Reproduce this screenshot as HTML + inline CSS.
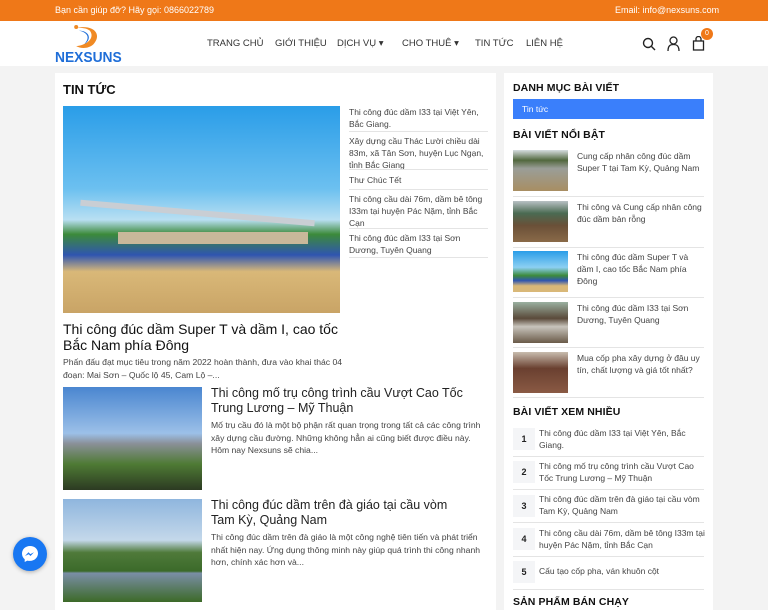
<!DOCTYPE html>
<html><head><meta charset="utf-8"><style>
*{margin:0;padding:0;box-sizing:border-box}
body{width:768px;height:610px;overflow:hidden;background:#f3f3f3;font-family:"Liberation Sans","Noto Sans CJK SC",sans-serif;color:#333;position:relative}
.abs{position:absolute}
.top{left:0;top:0;width:768px;height:21px;background:#ef7818;color:#fff;font-size:9px}
.hdr{left:0;top:21px;width:768px;height:45px;background:#fff}
.nav{top:38px;font-size:9.5px;color:#333;white-space:nowrap}
.card{background:#fff}
.t{font-size:8.5px;line-height:12px;color:#444}
.sep{border-top:1px solid #e4e4e4}
h3{font-size:10.5px;font-weight:bold;color:#111;letter-spacing:.1px}
.num{width:22px;height:22px;background:#f4f5f7;font-size:9px;font-weight:bold;color:#222;text-align:center;line-height:22px}
.ex{font-size:8.6px;line-height:12.5px}
</style></head><body>
<div class="abs top"><span class="abs" style="left:55px;top:5px">Bạn cần giúp đỡ? Hãy gọi: 0866022789</span><span class="abs" style="left:615px;top:5px">Email: info@nexsuns.com</span></div>
<div class="abs hdr"></div>
<svg class="abs" style="left:68px;top:23px" width="40" height="28" viewBox="0 0 44 30"><circle cx="9" cy="4" r="2.2" fill="#f08a24"/><path d="M10 5 C28 1 38 12 28 23 C23 28 14 28 9 25 C21 24 30 16 24 8 C20 5 15 5 10 5Z" fill="#f08a24"/><path d="M12 8 C23 8 27 17 18 23 C25 15 21 10 12 8Z" fill="#1f6ed8"/></svg>
<div class="abs" style="left:55px;top:49px;font-size:15px;font-weight:bold;color:#1f6ed8;transform:scaleX(.92);transform-origin:left">NEXSUNS</div>
<div class="abs nav" style="left:207px">TRANG CHỦ</div>
<div class="abs nav" style="left:275px">GIỚI THIỆU</div>
<div class="abs nav" style="left:337px">DỊCH VỤ ▾</div>
<div class="abs nav" style="left:402px">CHO THUÊ ▾</div>
<div class="abs nav" style="left:475px">TIN TỨC</div>
<div class="abs nav" style="left:526px">LIÊN HỆ</div>
<svg class="abs" style="left:642px;top:37px" width="14" height="14" viewBox="0 0 14 14" fill="none" stroke="#222" stroke-width="1.4"><circle cx="6" cy="6" r="4.5"/><path d="M9.5 9.5L13 13"/></svg>
<svg class="abs" style="left:667px;top:36px" width="13" height="15" viewBox="0 0 13 15" fill="none" stroke="#222" stroke-width="1.3"><circle cx="6.5" cy="4.5" r="3.5"/><path d="M1 15C1 10 3 8.5 6.5 8.5S12 10 12 15"/></svg>
<svg class="abs" style="left:692px;top:36px" width="13" height="15" viewBox="0 0 13 15" fill="none" stroke="#222" stroke-width="1.3"><rect x="1.5" y="5" width="10" height="9"/><path d="M4 5V3a2.5 2.5 0 0 1 5 0v2"/></svg>
<div class="abs" style="left:701px;top:28px;width:12px;height:12px;border-radius:50%;background:#ef7818;color:#fff;font-size:7px;text-align:center;line-height:12px">0</div>

<div class="abs card" style="left:55px;top:73px;width:441px;height:537px"></div>
<div class="abs" style="left:63px;top:82px;font-size:13px;font-weight:bold;color:#111">TIN TỨC</div>
<div class="abs" style="left:63px;top:106px;width:277px;height:207px;background:linear-gradient(180deg,#2a9de8 0%,#6cc0f0 40%,#b9dff2 55%,#3c8a3a 62%,#2f55b0 72%,#d9b878 80%,#c9a466 100%)"></div>
<div class="abs" style="left:80px;top:210px;width:235px;height:6px;background:#c9ced4;transform:rotate(5deg)"></div>
<div class="abs" style="left:118px;top:232px;width:190px;height:12px;background:#c8b89a"></div>
<div class="abs t" style="left:349px;top:106px;width:140px">Thi công đúc dầm I33 tại Việt Yên, Bắc Giang.</div>
<div class="abs sep" style="left:349px;top:131px;width:139px"></div>
<div class="abs t" style="left:349px;top:135px;width:140px">Xây dựng cầu Thác Lười chiều dài 83m, xã Tân Sơn, huyện Lục Ngạn, tỉnh Bắc Giang</div>
<div class="abs sep" style="left:349px;top:169px;width:139px"></div>
<div class="abs t" style="left:349px;top:174px">Thư Chúc Tết</div>
<div class="abs sep" style="left:349px;top:189px;width:139px"></div>
<div class="abs t" style="left:349px;top:193px;width:142px">Thi công cầu dài 76m, dầm bê tông I33m tại huyện Pác Nặm, tỉnh Bắc Cạn</div>
<div class="abs sep" style="left:349px;top:228px;width:139px"></div>
<div class="abs t" style="left:349px;top:232px;width:140px">Thi công đúc dầm I33 tại Sơn Dương, Tuyên Quang</div>
<div class="abs sep" style="left:349px;top:257px;width:139px"></div>
<div class="abs" style="left:63px;top:321px;width:290px;font-size:14px;line-height:16px;color:#111">Thi công đúc dầm Super T và dầm I, cao tốc Bắc Nam phía Đông</div>
<div class="abs t ex" style="left:63px;top:356px;width:282px">Phấn đấu đạt mục tiêu trong năm 2022 hoàn thành, đưa vào khai thác 04 đoạn: Mai Sơn – Quốc lộ 45, Cam Lộ –...</div>

<div class="abs" style="left:63px;top:387px;width:139px;height:103px;background:linear-gradient(180deg,#4a86d0 0%,#9cc0e8 45%,#8a9098 55%,#4e7a34 75%,#2c3a22 100%)"></div>
<div class="abs" style="left:211px;top:386px;width:272px;font-size:12.5px;line-height:15px;color:#222">Thi công mố trụ công trình cầu Vượt Cao Tốc Trung Lương – Mỹ Thuận</div>
<div class="abs t ex" style="left:211px;top:419px;width:280px">Mố trụ cầu đó là một bộ phận rất quan trọng trong tất cả các công trình xây dựng cầu đường. Những không hẳn ai cũng biết được điều này. Hôm nay Nexsuns sẽ chia...</div>

<div class="abs" style="left:63px;top:499px;width:139px;height:103px;background:linear-gradient(180deg,#8fb6de 0%,#c4d8ea 40%,#4f7a3a 52%,#3b6a2a 70%,#7a8ea6 72%,#3c6a28 100%)"></div>
<div class="abs" style="left:211px;top:498px;width:262px;font-size:12.5px;line-height:15px;color:#222">Thi công đúc dầm trên đà giáo tại cầu vòm Tam Kỳ, Quảng Nam</div>
<div class="abs t ex" style="left:211px;top:531px;width:280px">Thi công đúc dầm trên đà giáo là một công nghệ tiên tiến và phát triển nhất hiện nay. Ứng dụng thông minh này giúp quá trình thi công nhanh hơn, chính xác hơn và...</div>

<div class="abs" style="left:13px;top:537px;width:34px;height:34px;border-radius:50%;background:#1877f2;box-shadow:0 1px 4px rgba(0,0,0,.3)"></div>
<svg class="abs" style="left:21px;top:545px" width="18" height="18" viewBox="0 0 18 18"><path d="M9 1C4.5 1 1 4.3 1 8.6c0 2.3 1 4.3 2.7 5.6V17l2.6-1.4c.8.2 1.7.3 2.7.3 4.5 0 8-3.3 8-7.6S13.5 1 9 1z" fill="#fff"/><path d="M4 11l3.5-3.7 1.8 1.8L13 7.3 9.5 11 7.7 9.2z" fill="#1877f2"/></svg>

<div class="abs card" style="left:504px;top:73px;width:209px;height:537px"></div>
<h3 class="abs" style="left:513px;top:82px">DANH MỤC BÀI VIẾT</h3>
<div class="abs" style="left:513px;top:99px;width:191px;height:20px;background:#3a7ffb;color:#fff;font-size:8.5px;line-height:20px;padding-left:9px">Tin tức</div>
<h3 class="abs" style="left:513px;top:129px">BÀI VIẾT NỔI BẬT</h3>
<div class="abs" style="left:513px;top:150px;width:55px;height:41px;background:linear-gradient(180deg,#d6dde0 0%,#52683e 25%,#9a9e98 45%,#a88e62 100%)"></div>
<div class="abs t" style="left:577px;top:150px;width:130px">Cung cấp nhân công đúc dầm Super T tại Tam Kỳ, Quảng Nam</div>
<div class="abs sep" style="left:513px;top:196px;width:191px"></div>
<div class="abs" style="left:513px;top:201px;width:55px;height:41px;background:linear-gradient(180deg,#b8c0c4 0%,#4a6a52 30%,#6a5038 60%,#8a6a48 100%)"></div>
<div class="abs t" style="left:577px;top:201px;width:130px">Thi công và Cung cấp nhân công đúc dầm bản rỗng</div>
<div class="abs sep" style="left:513px;top:247px;width:191px"></div>
<div class="abs" style="left:513px;top:251px;width:55px;height:41px;background:linear-gradient(180deg,#2a9de8 0%,#8cd0f2 40%,#3c8a3a 60%,#2f55b0 72%,#d9b878 85%)"></div>
<div class="abs t" style="left:577px;top:251px;width:130px">Thi công đúc dầm Super T và dầm I, cao tốc Bắc Nam phía Đông</div>
<div class="abs sep" style="left:513px;top:297px;width:191px"></div>
<div class="abs" style="left:513px;top:302px;width:55px;height:41px;background:linear-gradient(180deg,#9ab0a0 0%,#5a4a3a 40%,#c8c4bc 60%,#6a5a48 100%)"></div>
<div class="abs t" style="left:577px;top:302px;width:130px">Thi công đúc dầm I33 tại Sơn Dương, Tuyên Quang</div>
<div class="abs sep" style="left:513px;top:347px;width:191px"></div>
<div class="abs" style="left:513px;top:352px;width:55px;height:41px;background:linear-gradient(180deg,#c8bcae 0%,#6a4030 40%,#8a5a44 100%)"></div>
<div class="abs t" style="left:577px;top:352px;width:130px">Mua cốp pha xây dựng ở đâu uy tín, chất lượng và giá tốt nhất?</div>
<div class="abs sep" style="left:513px;top:397px;width:191px"></div>
<h3 class="abs" style="left:513px;top:406px">BÀI VIẾT XEM NHIỀU</h3>
<div class="abs num" style="left:513px;top:428px">1</div><div class="abs t" style="left:539px;top:427px;width:165px">Thi công đúc dầm I33 tại Việt Yên, Bắc Giang.</div>
<div class="abs sep" style="left:513px;top:456px;width:191px"></div>
<div class="abs num" style="left:513px;top:461px">2</div><div class="abs t" style="left:539px;top:460px;width:165px">Thi công mố trụ công trình cầu Vượt Cao Tốc Trung Lương – Mỹ Thuận</div>
<div class="abs sep" style="left:513px;top:489px;width:191px"></div>
<div class="abs num" style="left:513px;top:495px">3</div><div class="abs t" style="left:539px;top:493px;width:165px">Thi công đúc dầm trên đà giáo tại cầu vòm Tam Kỳ, Quảng Nam</div>
<div class="abs sep" style="left:513px;top:522px;width:191px"></div>
<div class="abs num" style="left:513px;top:528px">4</div><div class="abs t" style="left:539px;top:527px;width:168px">Thi công cầu dài 76m, dầm bê tông I33m tại huyện Pác Nặm, tỉnh Bắc Cạn</div>
<div class="abs sep" style="left:513px;top:556px;width:191px"></div>
<div class="abs num" style="left:513px;top:561px">5</div><div class="abs t" style="left:539px;top:565px;width:165px">Cấu tạo cốp pha, ván khuôn cột</div>
<div class="abs sep" style="left:513px;top:589px;width:191px"></div>
<h3 class="abs" style="left:513px;top:596px">SẢN PHẨM BÁN CHẠY</h3>
</body></html>
